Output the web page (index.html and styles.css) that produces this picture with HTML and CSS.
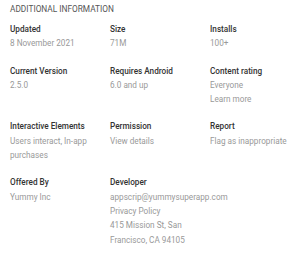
FILE: index.html
```html
<!DOCTYPE html>
<html lang="en">
<head>
    <meta charset="UTF-8">
    <meta name="viewport" content="width=device-width, initial-scale=1.0">
    <title>Additional Information</title>
    <link rel="stylesheet" href="styles.css">
</head>
<body>
    <div class="info">
        <h3 class="info-title">Additional Information</h3>
        <div class="info-grid">
            <div class="cell">
                <div class="label">Updated</div>
                <div class="value">8 November 2021</div>
            </div>
            <div class="cell">
                <div class="label">Size</div>
                <div class="value">71M</div>
            </div>
            <div class="cell">
                <div class="label">Installs</div>
                <div class="value">100+</div>
            </div>

            <div class="cell">
                <div class="label">Current Version</div>
                <div class="value">2.5.0</div>
            </div>
            <div class="cell">
                <div class="label">Requires Android</div>
                <div class="value">6.0 and up</div>
            </div>
            <div class="cell">
                <div class="label">Content rating</div>
                <div class="value">Everyone</div>
                <div class="value">Learn more</div>
            </div>

            <div class="cell">
                <div class="label">Interactive Elements</div>
                <div class="value">Users interact, In-app purchases</div>
            </div>
            <div class="cell">
                <div class="label">Permission</div>
                <div class="value">View details</div>
            </div>
            <div class="cell">
                <div class="label">Report</div>
                <div class="value">Flag as inappropriate</div>
            </div>

            <div class="cell">
                <div class="label">Offered By</div>
                <div class="value">Yummy Inc</div>
            </div>
            <div class="cell wide">
                <div class="label">Developer</div>
                <div class="value">appscrip@yummysuperapp.com</div>
                <div class="value">Privacy Policy</div>
                <div class="value narrow">415 Mission St, San Francisco, CA 94105</div>
            </div>
        </div>
    </div>
</body>
</html>
```

FILE: styles.css
```css
body {
    margin: 0;
    background: #fff;
    font-family: Roboto, "Noto Sans", Arial, sans-serif;
}
.info {
    padding: 3px 10px 0 10px;
}
.info-title {
    margin: 0;
    font-size: 8.3px;
    font-weight: 400;
    line-height: 13px;
    text-transform: uppercase;
    color: #555;
}
.info-grid {
    display: grid;
    grid-template-columns: 100px 100px 90px;
    row-gap: 13px;
    margin-top: 6px;
}
.label {
    font-size: 8.2px;
    font-weight: 500;
    line-height: 14.3px;
    color: #333;
}
.value {
    font-size: 8.2px;
    line-height: 14.3px;
    color: #999;
    padding-right: 8px;
}
.wide {
    grid-column: span 2;
}
.narrow {
    width: 80px;
}
```
